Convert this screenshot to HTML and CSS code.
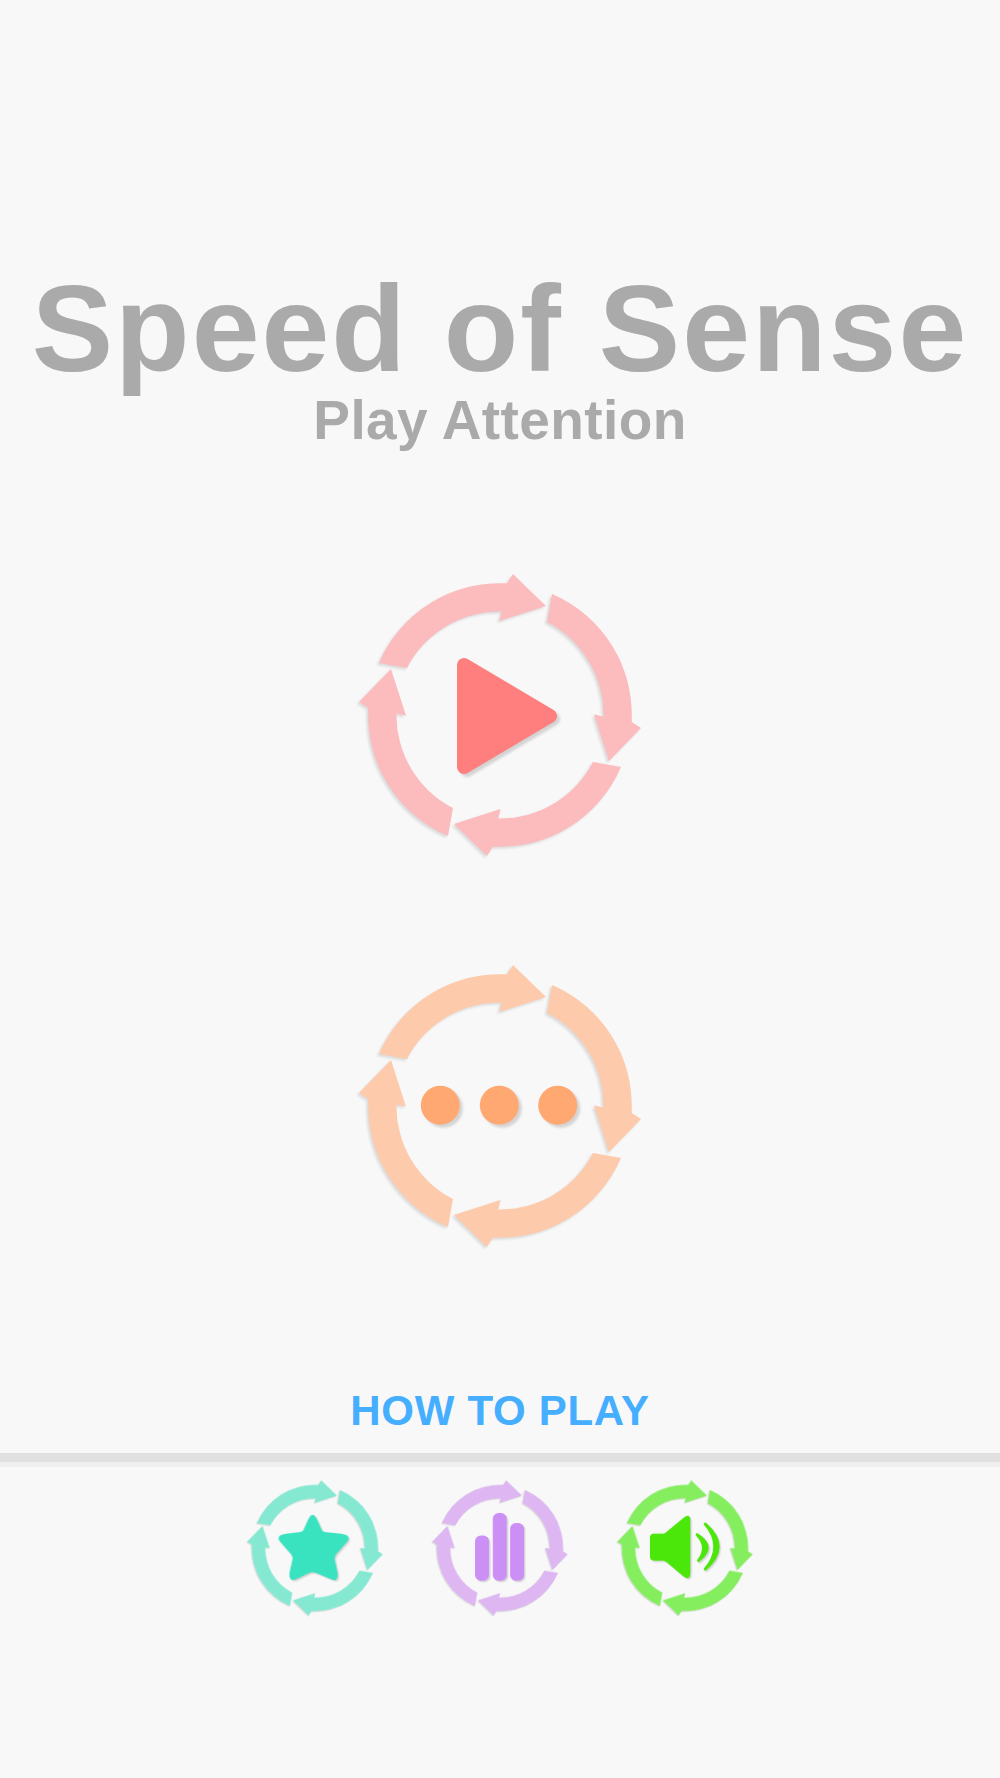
FILE: index.html
```html
<!DOCTYPE html>
<html lang="en">
<head>
    <meta charset="UTF-8">
    <meta name="viewport" content="width=device-width, initial-scale=1.0">
    <title>Speed of Sense</title>
    <link rel="stylesheet" href="styles.css">
</head>
<body>
    <svg class="defs" width="0" height="0">
        <symbol id="ring" viewBox="-150 -150 300 300" overflow="visible">
            <path id="arrow" d="M-121,-52 A132,132 0 0 1 7,-131.7 L13,-141 L46,-109 L-0.7,-94 L1.7,-103.5 A104,104 0 0 0 -93,-47 Z"/>
            <use href="#arrow" transform="rotate(90)"/>
            <use href="#arrow" transform="rotate(180)"/>
            <use href="#arrow" transform="rotate(270)"/>
        </symbol>
    </svg>

    <div class="page">
        <header class="title-block">
            <h1>Speed of Sense</h1>
            <h2>Play Attention</h2>
        </header>

        <div class="main-menu">
            <button class="big-btn">
                <svg class="big-icon" viewBox="-150 -150 300 300">
                    <use href="#ring" class="ring ring-pink" x="-150" y="-150" width="300" height="300"/>
                    <polygon class="glyph play" points="-36,-50 50,1 -36,52"/>
                </svg>
            </button>
            <button class="big-btn">
                <svg class="big-icon" viewBox="-150 -150 300 300">
                    <use href="#ring" class="ring ring-orange" x="-150" y="-150" width="300" height="300"/>
                    <g class="glyph dots">
                        <circle cx="-59.7" cy="-0.7" r="19.5"/>
                        <circle cx="-0.7" cy="-0.7" r="19.5"/>
                        <circle cx="57.7" cy="-0.7" r="19.5"/>
                    </g>
                </svg>
            </button>
        </div>

        <a class="how-to" href="#">HOW TO PLAY</a>
        <div class="divider"></div>

        <div class="small-menu">
            <button class="small-btn">
                <svg class="small-icon" viewBox="-150 -150 300 300">
                    <use href="#ring" class="ring ring-teal" x="-150" y="-150" width="300" height="300"/>
                    <path class="glyph star" d="M-15,-58 Q-5,-80 5,-58 L14,-38 Q17,-33 23,-33 L54,-30 Q78,-27 66,-12 L44,13 Q40,18 41,24 L47,52 Q49,73 31,64 L2,52 Q-5,49 -12,52 L-37,64 Q-56,73 -53,50 L-47,24 Q-46,18 -50,13 L-72,-12 Q-84,-27 -60,-30 L-33,-33 Q-27,-33 -24,-38 Z"/>
                </svg>
            </button>
            <button class="small-btn">
                <svg class="small-icon" viewBox="-150 -150 300 300">
                    <use href="#ring" class="ring ring-purple" x="-150" y="-150" width="300" height="300"/>
                    <g class="glyph bars">
                        <rect x="-52" y="-26" width="29" height="94" rx="12"/>
                        <rect x="-15" y="-73" width="29" height="141" rx="12"/>
                        <rect x="21" y="-52" width="29" height="120" rx="12"/>
                    </g>
                </svg>
            </button>
            <button class="small-btn">
                <svg class="small-icon" viewBox="-150 -150 300 300">
                    <use href="#ring" class="ring ring-green" x="-150" y="-150" width="300" height="300"/>
                    <g class="glyph sound">
                        <path d="M-73,-22 Q-73,-30 -65,-30 L-46,-30 Q-42,-30 -38,-34 L-2,-64 Q11,-72 11,-58 L11,52 Q11,68 -2,60 L-38,30 Q-42,26 -46,26 L-65,26 Q-73,26 -73,18 Z"/>
                        <path class="wave" d="M25,-28 Q66,-2 28,26 Q50,-2 25,-28 Z"/>
                        <path class="wave" d="M42,-50 Q96,-3 42,44 Q82,-3 42,-50 Z"/>
                    </g>
                </svg>
            </button>
        </div>
    </div>
</body>
</html>
```

FILE: styles.css
```css
html, body {
    margin: 0;
    background-color: #f8f8f8;
}

.defs {
    position: absolute;
}

.page {
    display: flex;
    flex-direction: column;
    align-items: center;
    height: 1778px;
    overflow: hidden;
    font-family: "Liberation Sans", Arial, sans-serif;
}

.title-block {
    padding-top: 262px;
    text-align: center;
    color: #aaaaaa;
}

h1 {
    margin: 0;
    font-size: 122px;
    line-height: 134px;
    font-weight: bold;
    letter-spacing: 2px;
    white-space: nowrap;
}

h2 {
    margin: 2px 0 0;
    font-size: 55px;
    line-height: 44px;
    font-weight: bold;
    letter-spacing: 0.4px;
}

button {
    display: block;
    padding: 0;
    border: none;
    background: none;
    cursor: pointer;
}

.main-menu {
    display: flex;
    flex-direction: column;
    align-items: center;
    gap: 91px;
    padding-top: 123px;
}

.big-icon {
    display: block;
    width: 300px;
    height: 300px;
}

.how-to {
    margin-top: 131px;
    font-size: 42px;
    line-height: 48px;
    font-weight: bold;
    letter-spacing: 0.7px;
    color: #45aeff;
    text-decoration: none;
}

.divider {
    align-self: stretch;
    height: 9px;
    margin-top: 18px;
    background-color: #e0e0e0;
    border-bottom: 5px solid #efefef;
}

.small-menu {
    display: flex;
    justify-content: center;
    gap: 41px;
    padding-top: 9px;
}

.small-icon {
    display: block;
    width: 144px;
    height: 144px;
}

.ring {
    filter: drop-shadow(-2px 2px 1px #dcdcdc);
}

.ring-pink { fill: #fcbbbd; }
.ring-orange { fill: #fdcaab; }
.ring-teal { fill: #85e9d2; }
.ring-purple { fill: #ddb6f2; }
.ring-green { fill: #85ee5f; }

.glyph {
    filter: drop-shadow(3px 3px 1px #d4d4d4);
}

.play {
    fill: #ff7f7f;
    stroke: #ff7f7f;
    stroke-width: 14;
    stroke-linejoin: round;
}

.dots {
    fill: #ffa872;
}

.star {
    fill: #39e3bf;
}

.bars {
    fill: #cc8ff5;
}

.sound {
    fill: #4be60a;
}

.wave {
    stroke: #4be60a;
    stroke-width: 6;
    stroke-linejoin: round;
}
```
